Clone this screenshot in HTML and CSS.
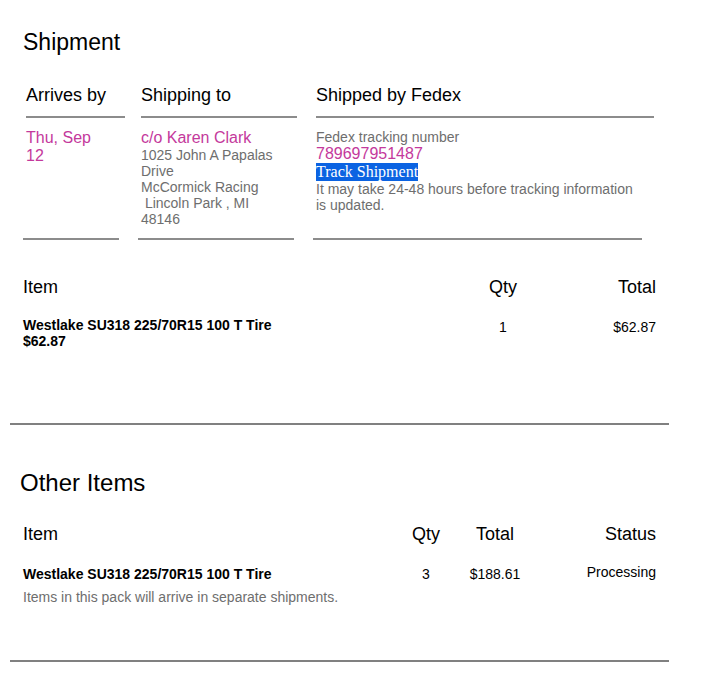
FILE: index.html
```html
<!DOCTYPE html>
<html>
<head>
<meta charset="utf-8">
<link rel="stylesheet" href="styles.css">
</head>
<body>
<div class="page">
  <h1 class="title">Shipment</h1>
  <div class="cols">
    <div class="col col-arrive">
      <div class="col-head">Arrives by</div>
      <div class="col-body body-arrive"><div class="pink">Thu, Sep 12</div></div>
    </div>
    <div class="col col-ship">
      <div class="col-head">Shipping to</div>
      <div class="col-body body-ship">
        <div class="pink">c/o Karen Clark</div>
        <div class="gray">1025 John A Papalas Drive</div>
        <div class="gray">McCormick Racing</div>
        <div class="gray">&nbsp;Lincoln Park , MI 48146</div>
      </div>
    </div>
    <div class="col col-fedex">
      <div class="col-head">Shipped by Fedex</div>
      <div class="col-body body-fedex">
        <div class="gray">Fedex tracking number</div>
        <div class="pink">789697951487</div>
        <div><span class="track">Track Shipment</span></div>
        <div class="gray">It may take 24-48 hours before tracking information is updated.</div>
      </div>
    </div>
  </div>
  <div class="col-rules">
    <div class="rule r1"></div>
    <div class="rule r2"></div>
    <div class="rule r3"></div>
  </div>

  <div class="table t1">
    <div class="th">Item</div>
    <div class="th center">Qty</div>
    <div class="th right">Total</div>
    <div class="td bold">Westlake SU318 225/70R15 100 T Tire<br>$62.87</div>
    <div class="td center nudge">1</div>
    <div class="td right nudge">$62.87</div>
  </div>

  <div class="hr hr-top"></div>

  <h2 class="subtitle">Other Items</h2>
  <div class="table t2">
    <div class="th">Item</div>
    <div class="th center">Qty</div>
    <div class="th center">Total</div>
    <div class="th right">Status</div>
    <div class="td">
      <div class="bold">Westlake SU318 225/70R15 100 T Tire</div>
      <div class="gray note">Items in this pack will arrive in separate shipments.</div>
    </div>
    <div class="td center">3</div>
    <div class="td center">$188.61</div>
    <div class="td right status">Processing</div>
  </div>

  <div class="hr hr-bottom"></div>
</div>
</body>
</html>
```

FILE: styles.css
```css
html, body {
  margin: 0;
  padding: 0;
  background: #ffffff;
}
body {
  font-family: "Liberation Sans", Arial, sans-serif;
  color: #000;
}
.page {
  padding-left: 23px;
  width: 633px;
}
.title {
  margin: 29px 0 0 0;
  font-size: 23px;
  line-height: 26px;
  font-weight: normal;
}
.cols {
  display: flex;
  gap: 16px;
  margin-top: 30px;
  margin-left: 3px;
  align-items: flex-start;
}
.col-arrive { width: 99px; }
.col-ship { width: 156px; }
.col-fedex { width: 338px; margin-left: 3px; }
.col-head {
  font-size: 18px;
  line-height: 21px;
  padding-bottom: 10px;
  border-bottom: 2px solid #8c8c8c;
}
.col-body {
  padding-top: 11px;
}
.body-arrive { width: 80px; }
.body-ship { width: 145px; }
.body-fedex { width: 328px; }
.pink {
  color: #c4399c;
  font-size: 16px;
  line-height: 18px;
}
.gray {
  color: #6e6e6e;
  font-size: 14px;
  line-height: 16px;
}
.track {
  display: inline-block;
  font-family: "Liberation Serif", "Times New Roman", serif;
  font-size: 16px;
  line-height: 18px;
  background: #0b63e2;
  color: #fff;
}
.col-rules {
  display: flex;
  gap: 19px;
  margin-top: 11px;
}
.rule {
  height: 2px;
  background: #8c8c8c;
}
.r1 { width: 96px; }
.r2 { width: 156px; }
.r3 { width: 329px; }

.table {
  display: grid;
  align-items: start;
}
.t1 {
  grid-template-columns: 1fr 60px 123px;
  margin-top: 37px;
  row-gap: 19px;
}
.t2 {
  grid-template-columns: 1fr 60px 78px 122px;
  margin-top: 27px;
  row-gap: 21px;
}
.th {
  font-size: 18px;
  line-height: 21px;
}
.td {
  font-size: 14px;
  line-height: 16px;
}
.nudge { margin-top: 2px; }
.bold { font-weight: bold; font-size: 14px; line-height: 16px; }
.center { text-align: center; }
.right { text-align: right; }
.note { margin-top: 7px; }
.status { margin-top: -2px; }
.hr {
  height: 2px;
  background: #808080;
  margin-left: -13px;
  width: 659px;
}
.hr-top { margin-top: 74px; }
.subtitle {
  margin: 44px 0 0 -3px;
  font-size: 24px;
  line-height: 28px;
  font-weight: normal;
}
.hr-bottom { margin-top: 55px; }
```
